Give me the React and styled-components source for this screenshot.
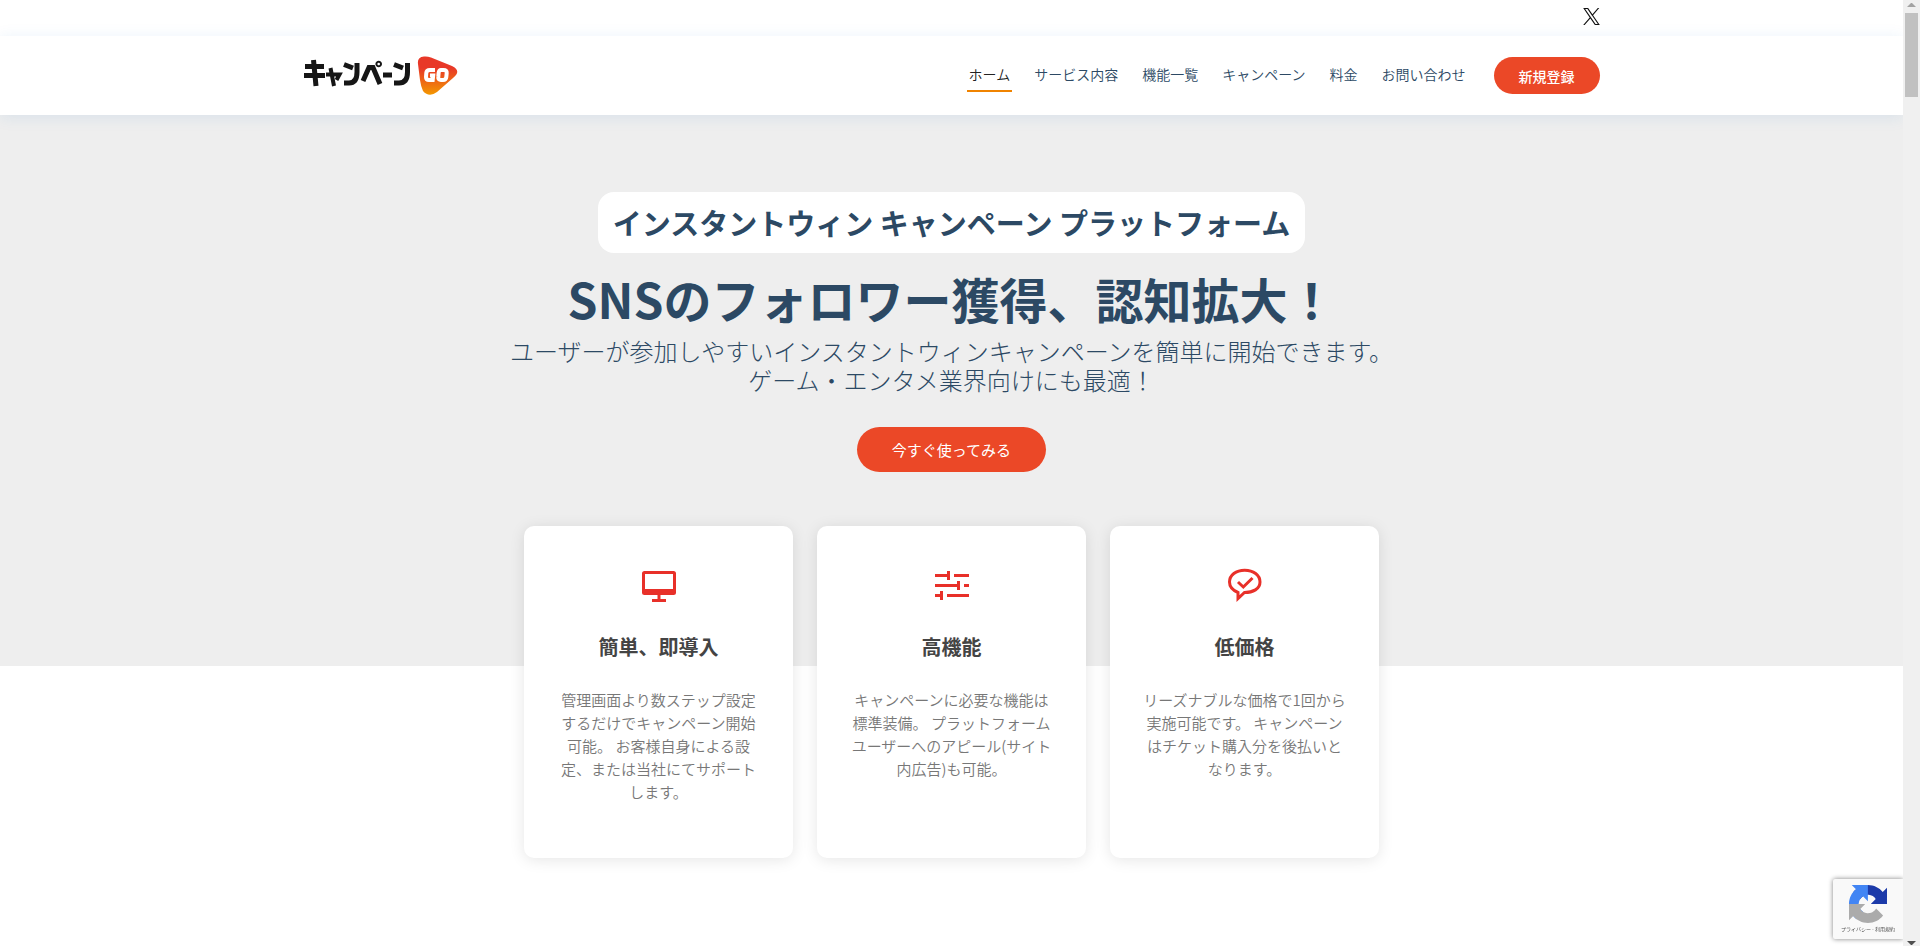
import React from "react";
import styled, { createGlobalStyle, css } from "styled-components";

const GlobalStyle = createGlobalStyle`
  * { box-sizing: border-box; }
  body {
    margin: 0;
    background: #fff;
    color: #2c4964;
    font-family: "Noto Sans CJK JP", "Open Sans", sans-serif;
  }
  a { color: inherit; text-decoration: none; }
  h1, h2, h3, p { margin: 0; }
`;

const Page = styled.div`
  min-height: 100vh;
  padding-right: 17px;
  overflow: hidden;
`;

const Container = styled.div`
  display: flex;
  align-items: center;
  justify-content: ${(p) => p.$justify || "space-between"};
  width: 100%;
  max-width: 1320px;
  margin: 0 auto;
  padding: 0 12px;
`;

const TopBar = styled.div`
  display: flex;
  height: 36px;
  padding-bottom: 4px;
  background: #fff;
`;

const SocialLink = styled.a`
  display: flex;
  color: #111;
`;

const Header = styled.header`
  position: relative;
  display: flex;
  height: 79px;
  background: #fff;
  box-shadow: 0 2px 15px rgba(25, 119, 204, 0.1);
`;

const Logo = styled.a`
  display: flex;
`;

const Nav = styled.nav`
  display: flex;
  align-items: center;
`;

const NavList = styled.ul`
  display: flex;
  gap: 20px;
  margin: 0;
  padding: 0;
  list-style: none;
`;

const NavLink = styled.a`
  display: block;
  padding: 3px 2px 4px;
  border-bottom: 2px solid ${(p) => (p.$active ? "#f08300" : "transparent")};
  color: ${(p) => (p.$active ? "#222" : "#2c4964")};
  font-size: 14px;
  font-weight: 350;
  line-height: 24px;
  white-space: nowrap;
`;

const pill = css`
  display: flex;
  flex: none;
  align-items: center;
  justify-content: center;
  border: 0;
  border-radius: 50px;
  background: #eb4827;
  color: #fff;
  font-family: inherit;
  white-space: nowrap;
  cursor: pointer;
`;

const RegisterButton = styled.button`
  ${pill}
  height: 37px;
  margin-left: 26px;
  padding: 0 25px;
  font-size: 14px;
  font-weight: 500;
`;

const StartButton = styled.button`
  ${pill}
  height: 45px;
  margin-top: 33px;
  padding: 0 35px;
  font-size: 15px;
  font-weight: 400;
`;

const Hero = styled.section`
  display: flex;
  flex-direction: column;
  align-items: center;
  height: 551px;
  padding-top: 77px;
  background: #eee;
  text-align: center;
`;

const Badge = styled.h2`
  padding: 12px 15px;
  border-radius: 16px;
  background: #fff;
  font-size: 29px;
  font-weight: 700;
  line-height: 37px;
`;

const Title = styled.h1`
  margin-top: 17px;
  font-size: 48px;
  font-weight: 700;
  line-height: 56px;
`;

const Lead = styled.p`
  margin-top: 10px;
  font-size: 24px;
  font-weight: 300;
  line-height: 29px;
`;

const Cards = styled.div`
  display: grid;
  grid-template-columns: repeat(3, 269px);
  gap: 24px;
  margin-top: 54px;
`;

const Card = styled.article`
  display: flex;
  flex-direction: column;
  align-items: center;
  height: 332px;
  padding: 40px 30px 0;
  border-radius: 10px;
  background: #fff;
  box-shadow: 0 2px 15px rgba(0, 0, 0, 0.1);
`;

const CardTitle = styled.h3`
  margin-top: 33px;
  color: #444;
  font-size: 20px;
  font-weight: 700;
  line-height: 24px;
`;

const CardText = styled.p`
  margin-top: 29px;
  color: #777;
  font-size: 15px;
  font-weight: 350;
  line-height: 23px;
`;

const Recaptcha = styled.a`
  position: fixed;
  right: 17px;
  bottom: 7px;
  display: flex;
  flex-direction: column;
  align-items: center;
  width: 70px;
  height: 60px;
  padding-top: 6px;
  border-radius: 2px 0 0 2px;
  background: #f9f9f9;
  box-shadow: 0 0 5px #808080;
  color: #555;
  font-size: 5px;
  line-height: 12px;
  white-space: nowrap;
`;

const ScrollTrack = styled.div`
  position: fixed;
  top: 0;
  right: 0;
  bottom: 0;
  display: flex;
  flex-direction: column;
  align-items: center;
  justify-content: space-between;
  width: 17px;
  background: #f0f0f0;
`;

const ScrollThumb = styled.div`
  width: 13px;
  height: 84px;
  margin-bottom: auto;
  background: #c1c1c1;
`;

const LogoMark = () => (
  <svg width="156" height="44" viewBox="1 1 156 44" role="img" aria-label="キャンペーンGO">
    <defs>
      <linearGradient id="go" x1="0" y1="0" x2="0" y2="1">
        <stop offset="0.3" stopColor="#e83828" />
        <stop offset="1" stopColor="#f39800" />
      </linearGradient>
    </defs>
    <g fill="none" stroke="#161616" strokeWidth="5">
      <path d="M2 13.500H21M1 22.500H22M10.500 7L13 33" />
      <path strokeWidth="4" d="M23 21.500H36.500L33.500 27M27.500 15L31 33" />
      <path d="M41 11.500L50 15M41 30H46Q54 30 54 19V10" />
      <path d="M60 28L66 14.500H70L77 31" />
      <path strokeWidth="2" d="M78 11a2.300 2.300 0 1 0 -4.600 0a2.300 2.300 0 1 0 4.600 0" />
      <path d="M80 22H89" />
      <path d="M91 11.500L100 15M91 30H96Q104.500 30 104.500 19V10" />
    </g>
    <path
      fill="url(#go)"
      d="M115 11Q114 4 121 3.500Q124 3 128 4.500L149 13Q159 18 150 25L134 39Q126 45 120 38Q118 34 117 27Z"
    />
    <g fill="none" stroke="#fff" strokeWidth="4">
      <path d="M132 17H127Q123.500 17 123.300 20L123 24Q123 27 126 27H129.700L130.200 22.500H127" />
      <path d="M138 17H140.500Q144 17 143.700 20L143.300 24Q143 27 140 27H138Q135 27 135.300 24L135.600 20Q136 17 138 17Z" />
    </g>
  </svg>
);

const XLogo = () => (
  <svg width="17" height="17" viewBox="0 0 24 24" fill="currentColor" aria-hidden="true">
    <path d="M14.234 10.162 22.977 0h-2.072l-7.591 8.824L7.251 0H.258l9.168 13.343L.258 24H2.330l8.016-9.318L16.749 24h6.993zm-2.837 3.299-.929-1.329L3.076 1.560h3.182l5.965 8.532.929 1.329 7.754 11.090h-3.182z" />
  </svg>
);

const icons = {
  desktop: (
    <path d="M32.500 5h-29A2.500 2.500 0 0 0 1 7.500v19A2.500 2.500 0 0 0 3.500 29H16.500v4H11v3h14v-3h-5.500v-4H32.500a2.500 2.500 0 0 0 2.500-2.500v-19A2.500 2.500 0 0 0 32.500 5zM32 23H4V8h28z" />
  ),
  tune: (
    <path d="M1 8h12v-3h3v9h-3v-3H1zM20 8h15v3H20zM1 18h22v-3h3v9h-3v-3H1zM30 18h5v3h-5zM1 28h5v-3h3v9H6v-3H1zM13 28h22v3H13z" />
  ),
  chat: (
    <g fill="none" stroke="currentColor" strokeWidth="3">
      <path d="M11 32.500V26.500C5 24 2.500 20.500 2.500 16C2.500 9 9 4.200 17.700 4.200S33 9 33 16S26 26.500 17.500 26.500Z" />
      <path d="M11 16L16.300 21L25.500 12" />
    </g>
  ),
};

const CardIcon = ({ name }) => (
  <svg width="36" height="36" viewBox="0 0 36 36" fill="currentColor" color="#e83029" aria-hidden="true">
    {icons[name]}
  </svg>
);

const RecaptchaLogo = () => (
  <svg width="38" height="38" viewBox="0 0 64 64" aria-hidden="true">
    <path fill="#1c3aa9" d="M64 31.955a33 33 0 0 0-.037-1.380V4.687l-7.157 7.157C50.948 4.674 42.033.093 32.050.093c-10.389 0-19.620 4.959-25.458 12.638l11.731 11.855a15.500 15.500 0 0 1 4.754-5.335c2.050-1.600 4.955-2.908 8.973-2.908.485 0 .860.057 1.135.163 4.977.393 9.291 3.140 11.831 7.126l-8.304 8.304 27.288-.019" />
    <path fill="#4285f4" d="M31.862.094a33 33 0 0 0-1.380.037H4.594l7.157 7.157C4.581 13.147 0 22.061 0 32.045c0 10.389 4.959 19.620 12.638 25.458l11.855-11.731a15.500 15.500 0 0 1-5.335-4.754c-1.600-2.050-2.908-4.955-2.908-8.973 0-.485.057-.860.163-1.135.393-4.977 3.140-9.291 7.126-11.831l8.304 8.304-.019-27.288" />
    <path fill="#ababab" d="M.001 32.045c.001.463.014.923.037 1.380v25.888l7.157-7.157c5.858 7.170 14.773 11.751 24.757 11.751 10.389 0 19.620-4.959 25.458-12.638L45.679 39.414a15.500 15.500 0 0 1-4.754 5.335c-2.050 1.600-4.955 2.908-8.973 2.908-.485 0-.860-.057-1.135-.163-4.977-.393-9.291-3.140-11.831-7.126l8.304-8.304-27.288.019" />
  </svg>
);

const navItems = ["ホーム", "サービス内容", "機能一覧", "キャンペーン", "料金", "お問い合わせ"];

const features = [
  {
    icon: "desktop",
    title: "簡単、即導入",
    text: "管理画面より数ステップ設定するだけでキャンペーン開始可能。 お客様自身による設定、または当社にてサポートします。",
  },
  {
    icon: "tune",
    title: "高機能",
    text: "キャンペーンに必要な機能は標準装備。 プラットフォームユーザーへのアピール(サイト内広告)も可能。",
  },
  {
    icon: "chat",
    title: "低価格",
    text: "リーズナブルな価格で1回から実施可能です。 キャンペーンはチケット購入分を後払いとなります。",
  },
];

export default function App() {
  return (
    <Page lang="ja">
      <GlobalStyle />
      <TopBar>
        <Container $justify="flex-end">
          <SocialLink href="#x" aria-label="X">
            <XLogo />
          </SocialLink>
        </Container>
      </TopBar>
      <Header>
        <Container>
          <Logo href="#top">
            <LogoMark />
          </Logo>
          <Nav>
            <NavList>
              {navItems.map((item, i) => (
                <li key={item}>
                  <NavLink href="#nav" $active={i === 0}>
                    {item}
                  </NavLink>
                </li>
              ))}
            </NavList>
            <RegisterButton type="button">新規登録</RegisterButton>
          </Nav>
        </Container>
      </Header>
      <Hero>
        <Badge>インスタントウィン キャンペーン プラットフォーム</Badge>
        <Title>SNSのフォロワー獲得、認知拡大！</Title>
        <Lead>
          ユーザーが参加しやすいインスタントウィンキャンペーンを簡単に開始できます。
          <br />
          ゲーム・エンタメ業界向けにも最適！
        </Lead>
        <StartButton type="button">今すぐ使ってみる</StartButton>
        <Cards>
          {features.map((f) => (
            <Card key={f.title}>
              <CardIcon name={f.icon} />
              <CardTitle>{f.title}</CardTitle>
              <CardText>{f.text}</CardText>
            </Card>
          ))}
        </Cards>
      </Hero>
      <Recaptcha href="#privacy">
        <RecaptchaLogo />
        プライバシー - 利用規約
      </Recaptcha>
      <ScrollTrack aria-hidden="true">
        <svg width="17" height="13" viewBox="0 0 17 13">
          <path fill="#a3a3a3" d="M8 3h1l4 4H4z" />
        </svg>
        <ScrollThumb />
        <svg width="17" height="13" viewBox="0 0 17 13">
          <path fill="#505050" d="M4 8h9l-4 4H8z" />
        </svg>
      </ScrollTrack>
    </Page>
  );
}
